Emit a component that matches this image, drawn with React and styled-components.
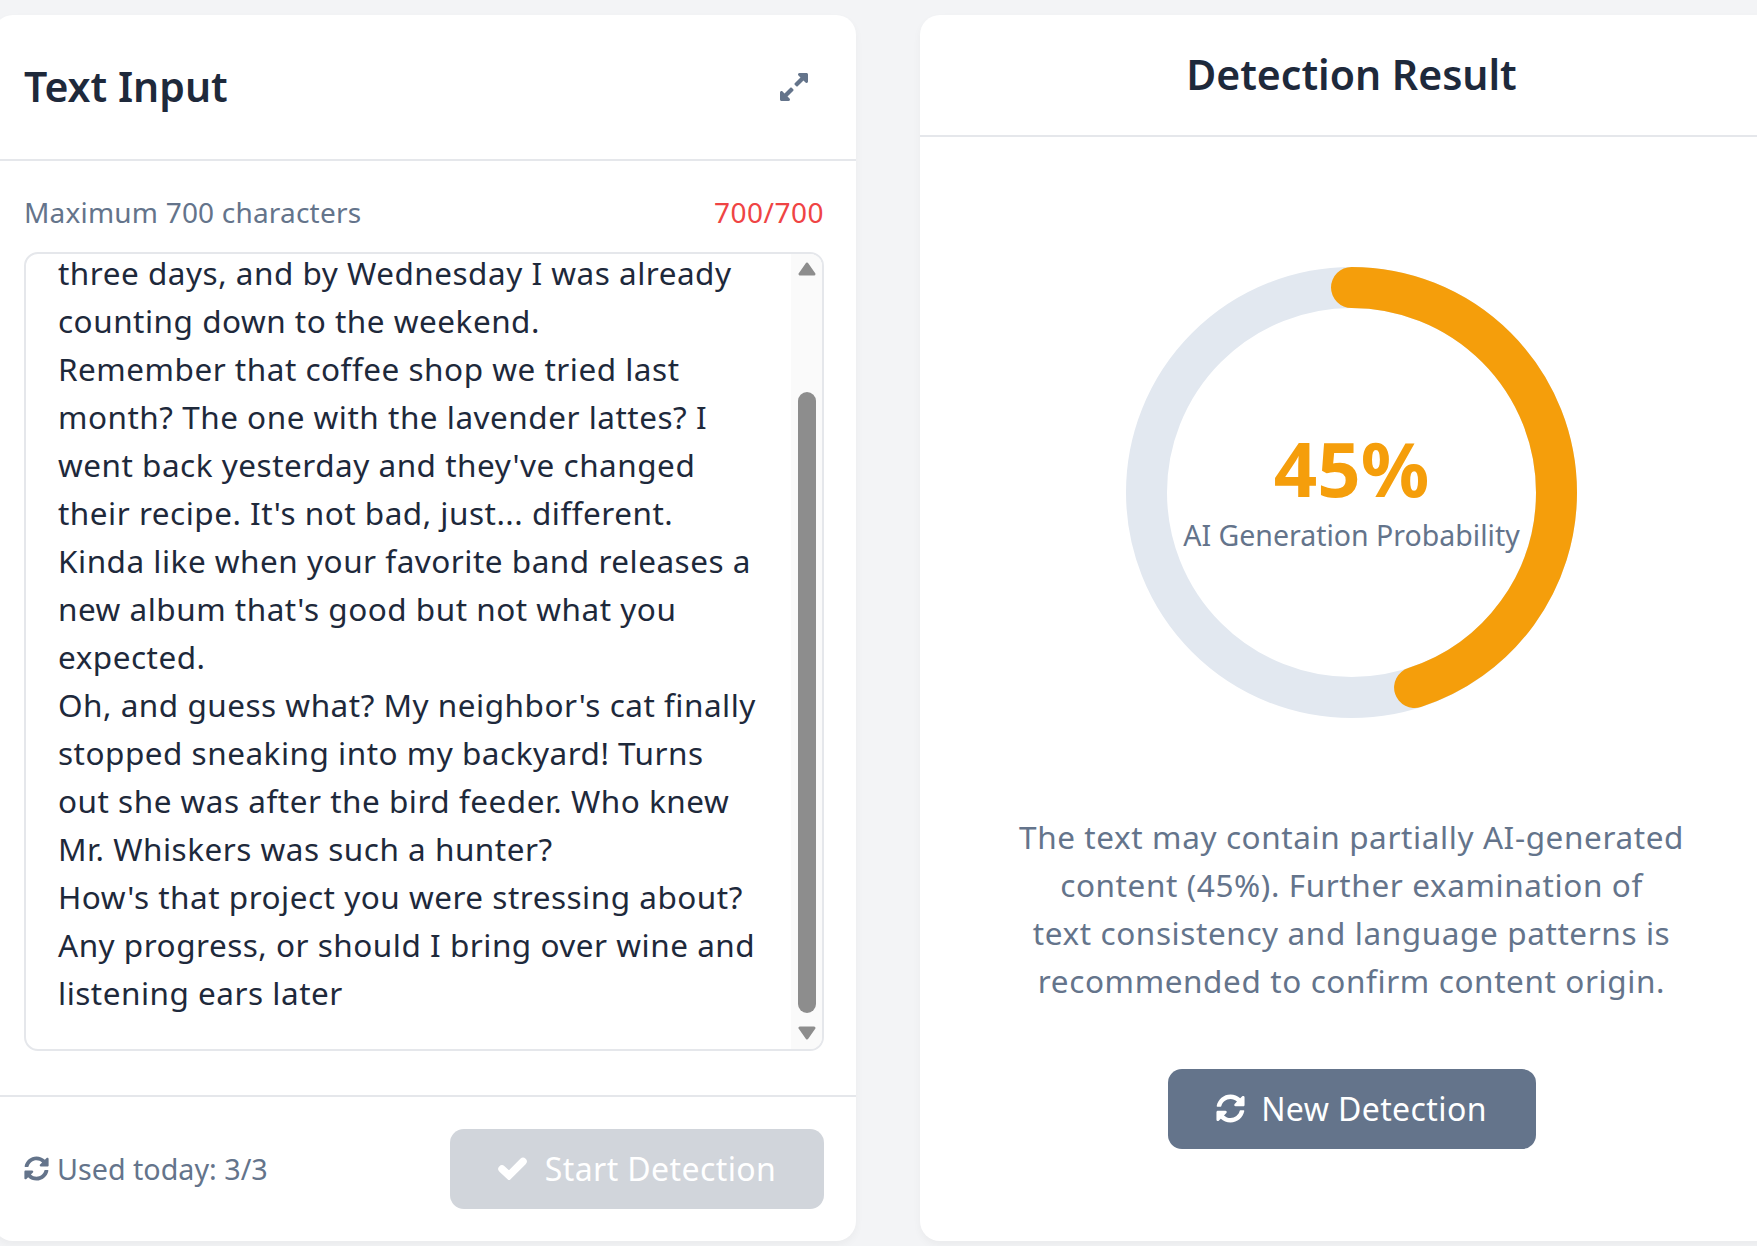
import styled, { createGlobalStyle } from 'styled-components';
import { FaExpandAlt, FaSyncAlt } from 'react-icons/fa';

const GlobalStyle = createGlobalStyle`
  html, body {
    margin: 0;
    padding: 0;
    height: 100%;
    overflow: hidden;
    background: #f3f4f6;
    font-family: "Noto Sans", "Open Sans", sans-serif;
  }
`;

const Page = styled.div`
  display: flex;
  gap: 64px;
  width: 1790px;
  height: 1246px;
  margin-left: -7px;
  padding-top: 15px;
  box-sizing: border-box;
`;
const Card = styled.section`
  display: flex;
  flex-direction: column;
  width: 863px;
  height: 1226px;
  background: #fff;
  border-radius: 20px;
  box-shadow: 0 4px 8px rgba(0, 0, 0, 0.04);
`;
const InputHeader = styled.header`
  display: flex;
  align-items: center;
  justify-content: space-between;
  height: 146px;
  padding: 0 46px 2px 31px;
  box-sizing: border-box;
  border-bottom: 2px solid #e5e7eb;
  color: #64748b;
  font-size: 32px;
`;
const ExpandIcon = styled(FaExpandAlt)`
  margin-top: 2px;
`;
const CardTitle = styled.h2`
  margin: 0;
  color: #1e293b;
  font-size: 41px;
  font-weight: 600;
`;
const InputBody = styled.div`
  flex: 1;
  display: flex;
  flex-direction: column;
  min-height: 0;
  padding: 34px 32px 44px 31px;
`;
const LabelRow = styled.div`
  display: flex;
  justify-content: space-between;
  align-items: center;
  height: 34px;
  margin-bottom: 23px;
  color: #64748b;
  font-size: 28px;
  letter-spacing: 0.2px;
`;
const Counter = styled.span`
  color: #ef4444;
  letter-spacing: 0.5px;
`;
const TextBox = styled.div`
  flex: 1;
  display: flex;
  min-height: 0;
  border: 2px solid #e5e7eb;
  border-radius: 14px;
`;
const TextPane = styled.div`
  flex: 1;
  padding-left: 32px;
  color: #1e293b;
  font-size: 31.5px;
  line-height: 48px;
  letter-spacing: 0.5px;
  white-space: pre-line;
`;
const PaneText = styled.div`
  margin-top: -5px;
`;
const Scrollbar = styled.div`
  display: flex;
  flex-direction: column;
  align-items: center;
  width: 31px;
  padding-top: 8px;
  box-sizing: border-box;
  border-radius: 0 12px 12px 0;
  background: #fafafa;
`;
const Thumb = styled.div`
  width: 18px;
  height: 621px;
  margin: 116px 0 13px;
  border-radius: 9px;
  background: #8d8d8d;
`;
const InputFooter = styled.footer`
  display: flex;
  align-items: center;
  justify-content: space-between;
  height: 146px;
  padding: 0 32px 0 31px;
  box-sizing: border-box;
  border-top: 2px solid #e5e7eb;
`;
const Usage = styled.div`
  display: flex;
  align-items: center;
  gap: 8px;
  margin-top: -2px;
  color: #64748b;
  font-size: 28.7px;
`;
const Button = styled.button`
  display: flex;
  align-items: center;
  justify-content: center;
  gap: ${(p) => p.$gap}px;
  width: ${(p) => p.$width}px;
  height: 80px;
  padding: 0 0 2px;
  border: 0;
  border-radius: 14px;
  background: ${(p) => p.$bg};
  color: #fff;
  font-family: inherit;
  font-size: 32px;
  letter-spacing: 0.4px;
`;
const ResultHeader = styled.header`
  display: flex;
  align-items: center;
  justify-content: center;
  height: 122px;
  padding-bottom: 2px;
  box-sizing: border-box;
  border-bottom: 2px solid #e5e7eb;
`;
const ResultBody = styled.div`
  display: flex;
  flex-direction: column;
  align-items: center;
  padding-top: 130px;
`;
const Ring = styled.div`
  position: relative;
  width: 451px;
  height: 451px;
`;
const RingCenter = styled.div`
  position: absolute;
  inset: 0;
  display: flex;
  flex-direction: column;
  align-items: center;
  justify-content: center;
  padding-bottom: 4px;
`;
const Percent = styled.div`
  color: #f59e0b;
  font-size: 76px;
  font-weight: 700;
  line-height: 84px;
`;
const RingLabel = styled.div`
  margin-top: 5px;
  color: #64748b;
  font-size: 28.5px;
  line-height: 40px;
`;
const Summary = styled.p`
  margin: 95px 0 64px;
  color: #64748b;
  font-size: 31.5px;
  line-height: 48px;
  letter-spacing: 0.6px;
  text-align: center;
  white-space: pre-line;
`;

const inputText = `three days, and by Wednesday I was already
counting down to the weekend.
Remember that coffee shop we tried last
month? The one with the lavender lattes? I
went back yesterday and they've changed
their recipe. It's not bad, just... different.
Kinda like when your favorite band releases a
new album that's good but not what you
expected.
Oh, and guess what? My neighbor's cat finally
stopped sneaking into my backyard! Turns
out she was after the bird feeder. Who knew
Mr. Whiskers was such a hunter?
How's that project you were stressing about?
Any progress, or should I bring over wine and
listening ears later`;

const summaryText = `The text may contain partially AI-generated
content (45%). Further examination of
text consistency and language patterns is
recommended to confirm content origin.`;

function ProgressRing({ percent }) {
  const r = 205;
  const c = 2 * Math.PI * r;
  return (
    <svg width="451" height="451" viewBox="0 0 451 451">
      <circle cx="225.5" cy="225.5" r={r} fill="none" stroke="#e2e8f0" strokeWidth="41" />
      <circle
        cx="225.5"
        cy="225.5"
        r={r}
        fill="none"
        stroke="#f59e0b"
        strokeWidth="41"
        strokeLinecap="round"
        strokeDasharray={`${(c * percent) / 100} ${c}`}
        transform="rotate(-90 225.5 225.5)"
      />
    </svg>
  );
}

function ScrollArrow({ down }) {
  return (
    <svg width="18" height="14" viewBox="0 0 18 14">
      <path
        d={down ? 'M2 2 H16 L9 12 Z' : 'M2 12 H16 L9 2 Z'}
        fill="#8d8d8d"
        stroke="#8d8d8d"
        strokeWidth="3"
        strokeLinejoin="round"
      />
    </svg>
  );
}

function CheckIcon() {
  return (
    <svg width="29" height="23" viewBox="0 0 29 23">
      <path
        d="M4 12 L11 18.5 L25 4.5"
        fill="none"
        stroke="#fff"
        strokeWidth="7.5"
        strokeLinecap="round"
        strokeLinejoin="miter"
      />
    </svg>
  );
}

export default function App() {
  return (
    <>
      <GlobalStyle />
      <Page>
        <Card>
          <InputHeader>
            <CardTitle>Text Input</CardTitle>
            <ExpandIcon />
          </InputHeader>
          <InputBody>
            <LabelRow>
              <span>Maximum 700 characters</span>
              <Counter>700/700</Counter>
            </LabelRow>
            <TextBox>
              <TextPane>
                <PaneText>{inputText}</PaneText>
              </TextPane>
              <Scrollbar>
                <ScrollArrow />
                <Thumb />
                <ScrollArrow down />
              </Scrollbar>
            </TextBox>
          </InputBody>
          <InputFooter>
            <Usage>
              <FaSyncAlt size={25} />
              Used today: 3/3
            </Usage>
            <Button $width={374} $gap={18} $bg="#d1d5db">
              <CheckIcon />
              Start Detection
            </Button>
          </InputFooter>
        </Card>
        <Card>
          <ResultHeader>
            <CardTitle>Detection Result</CardTitle>
          </ResultHeader>
          <ResultBody>
            <Ring>
              <ProgressRing percent={45} />
              <RingCenter>
                <Percent>45%</Percent>
                <RingLabel>AI Generation Probability</RingLabel>
              </RingCenter>
            </Ring>
            <Summary>{summaryText}</Summary>
            <Button $width={368} $gap={16} $bg="#64748b">
              <FaSyncAlt size={29} />
              New Detection
            </Button>
          </ResultBody>
        </Card>
      </Page>
    </>
  );
}
